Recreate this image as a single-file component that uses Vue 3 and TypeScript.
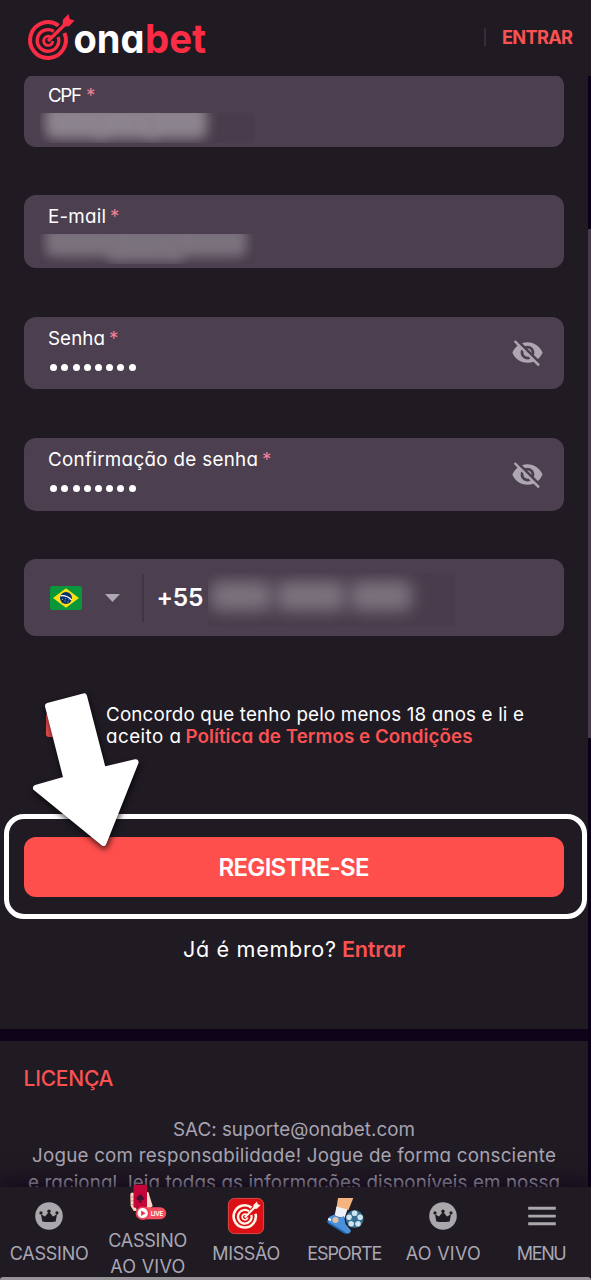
<script setup lang="ts">
interface Field {
  id: string
  label: string
  width: number
  secret: boolean
}
interface Line {
  text: string
  width: number
}
interface NavItem {
  id: string
  icon: 'crown' | 'live' | 'target' | 'sport' | 'menu'
  lines: Line[]
}

const fields: Field[] = [
  { id: 'cpf', label: 'CPF', width: 34, secret: false },
  { id: 'email', label: 'E-mail', width: 58, secret: false },
  { id: 'senha', label: 'Senha', width: 57, secret: true },
  { id: 'confirma', label: 'Confirmação de senha', width: 210, secret: true },
]

const licence: Line[] = [
  { text: 'SAC: suporte@onabet.com', width: 242 },
  { text: 'Jogue com responsabilidade! Jogue de forma consciente', width: 524 },
  { text: 'e racional, leia todas as informações disponíveis em nossa', width: 532 },
]

const nav: NavItem[] = [
  { id: 'cassino', icon: 'crown', lines: [{ text: 'CASSINO', width: 79 }] },
  { id: 'cassino-vivo', icon: 'live', lines: [{ text: 'CASSINO', width: 79 }, { text: 'AO VIVO', width: 75 }] },
  { id: 'missao', icon: 'target', lines: [{ text: 'MISSÃO', width: 68 }] },
  { id: 'esporte', icon: 'sport', lines: [{ text: 'ESPORTE', width: 75 }] },
  { id: 'vivo', icon: 'crown', lines: [{ text: 'AO VIVO', width: 75 }] },
  { id: 'menu', icon: 'menu', lines: [{ text: 'MENU', width: 50 }] },
]

// Tracks a single-line label so that it fills the given width in pixels.
const vFit = {
  mounted(el: HTMLElement, binding: { value: number }) {
    const count = (el.textContent ?? '').length
    const natural = el.getBoundingClientRect().width
    const spacing = (binding.value - natural) / Math.max(count - 1, 1)
    el.style.letterSpacing = `${spacing.toFixed(3)}px`
    el.style.marginRight = `${(-spacing).toFixed(3)}px`
  },
}
</script>

<template>
  <div class="page">
    <header class="header">
      <svg class="logo" width="184" height="50" viewBox="25 12 184 50">
        <g fill="none" stroke="#fb2c44">
          <path d="M58.5 25.6A17.9 17.9 0 1 0 64.4 33" stroke-width="4" />
          <path d="M53.8 31.4A10.8 10.8 0 1 0 58.2 37" stroke-width="3.4" />
          <path d="M51 37.2A4.6 4.6 0 1 0 52.8 41" stroke-width="2.8" />
          <path d="M48 41L66 23.5" stroke-width="3.4" />
        </g>
        <path d="M62.5 26.5L63 19.5L68.5 14L69.7 19L74.5 20.5L69 26.2Z" fill="#fb2c44" />
        <text class="word" x="73.5" y="52.5" fill="#fff" textLength="71" lengthAdjust="spacingAndGlyphs">ona</text>
        <text class="word" x="145" y="52.5" fill="#fb2c44" textLength="61" lengthAdjust="spacingAndGlyphs">bet</text>
      </svg>
      <div class="login"><span v-fit="71" class="fit">ENTRAR</span></div>
    </header>

    <div class="viewport">
      <main class="content">
        <form class="form">
          <div v-for="f in fields" :key="f.id" class="field">
            <div class="field-main">
              <div class="label"><span v-fit="f.width" class="fit">{{ f.label }}</span><i class="star">*</i></div>
              <div v-if="f.secret" class="dots"><b v-for="n in 8" :key="n" /></div>
              <div v-else class="redacted" :class="f.id"><b /><b /><b /></div>
            </div>
            <svg v-if="f.secret" class="eye" width="33" height="33" viewBox="0 0 24 24" fill="#aca7b0">
              <path d="M12 7c2.76 0 5 2.24 5 5 0 .65-.13 1.26-.36 1.83l2.92 2.92c1.51-1.26 2.7-2.89 3.43-4.75-1.73-4.39-6-7.5-11-7.5-1.4 0-2.74.25-3.98.7l2.16 2.16C10.74 7.13 11.35 7 12 7zM2 4.27l2.28 2.28.46.46C3.08 8.3 1.78 10.02 1 12c1.73 4.39 6 7.5 11 7.5 1.55 0 3.03-.3 4.38-.84l.42.42L19.73 22 21 20.73 3.27 3 2 4.27zM7.53 9.8l1.55 1.55c-.05.21-.08.43-.08.65 0 1.66 1.34 3 3 3 .22 0 .44-.03.65-.08l1.55 1.55c-.67.33-1.41.53-2.2.53-2.76 0-5-2.24-5-5 0-.79.2-1.53.53-2.2zm4.31-.78l3.15 3.15.02-.16c0-1.66-1.34-3-3-3l-.17.01z" />
            </svg>
          </div>

          <div class="field phone">
            <svg class="flag" width="32" height="24" viewBox="0 0 32 24">
              <rect width="32" height="24" rx="2.5" fill="#0a9739" />
              <path d="M16 2.2L29 12L16 21.8L3 12Z" fill="#fee011" />
              <circle cx="16" cy="12" r="6" fill="#06306f" />
              <path d="M10.6 9.8Q17 9 21.6 14" fill="none" stroke="#fff" stroke-width="1.3" />
              <path d="M12 13.5h1M14.5 15h1M17.5 16h1M15 12.7h.8M18.5 13.8h.8" stroke="#b9c8df" stroke-width="0.9" />
            </svg>
            <svg class="caret" width="15" height="8" viewBox="0 0 15 8"><path d="M0 0H15L7.5 8Z" fill="#aca7b0" /></svg>
            <span class="rule" />
            <span class="prefix"><span v-fit="47" class="fit">+55</span></span>
            <div class="redacted number"><b /><b /><b /></div>
          </div>

          <div class="consent">
            <span class="check" />
            <div class="consent-text">
              <div><span v-fit="418" class="fit">Concordo que tenho pelo menos 18 anos e li e</span></div>
              <div><span v-fit="75" class="fit">aceito a</span><a v-fit="287" class="fit link policy">Política de Termos e Condições</a></div>
            </div>
          </div>

          <button type="button" class="submit"><span v-fit="151" class="fit">REGISTRE-SE</span></button>
          <p class="member"><span v-fit="153" class="fit">Já é membro?</span><a v-fit="63" class="fit link enter">Entrar</a></p>
        </form>

        <section class="licence">
          <h2><span v-fit="90" class="fit">LICENÇA</span></h2>
          <div v-for="l in licence" :key="l.text" class="licence-line"><span v-fit="l.width" class="fit">{{ l.text }}</span></div>
        </section>
      </main>
      <div class="rail"><div class="thumb" /></div>
    </div>

    <nav class="nav">
      <div v-for="item in nav" :key="item.id" class="nav-item" :class="{ tall: item.lines.length > 1 }">
        <svg v-if="item.icon === 'crown'" width="38" height="38" viewBox="0 0 38 38">
          <circle cx="19" cy="19" r="13.8" fill="#aaa8ab" />
          <path d="M12.3 24.5L11 17.2L15 19.4L19 14.8L23 19.4L27 17.2L25.7 24.5Q19 25.6 12.3 24.5Z" fill="#201a23" />
          <circle cx="11" cy="15.9" r="1.6" fill="#201a23" />
          <circle cx="19" cy="14.2" r="1.7" fill="#201a23" />
          <circle cx="27" cy="15.9" r="1.6" fill="#201a23" />
        </svg>
        <svg v-else-if="item.icon === 'live'" class="live-icon" width="38" height="38" viewBox="3.3 0 38 38">
          <path d="M4.6 10Q5.5 7.5 8.5 9L11 27H8L5 22Z" fill="#ffd2bb" />
          <path d="M5.2 13h3.4M5.4 16.8h3.4M5.8 20.5h3.4" stroke="#bd7d70" stroke-width="0.7" />
          <path d="M18 13L21 8Q23.5 7.5 23.5 11L27 22L20 27H14Z" fill="#ffdcc9" />
          <rect x="7.8" y="0.8" width="13.5" height="23" rx="1.5" fill="#c30539" />
          <path d="M14.5 10L18.2 14Q18.5 17 15.2 16L16.2 18.5H12.8L13.8 16Q10.5 17 10.8 14Z" fill="#40132d" />
          <rect x="10" y="23.2" width="30.5" height="12" rx="6" fill="#f54d60" />
          <circle cx="17" cy="29.2" r="6.8" fill="#ed3d52" />
          <circle cx="17" cy="29.2" r="5.1" fill="#fff" />
          <path d="M15.4 26.4L20 29.2L15.4 32Z" fill="#e63950" />
          <text class="live" x="25" y="31.6" fill="#fff" textLength="12.5">LIVE</text>
        </svg>
        <svg v-else-if="item.icon === 'target'" width="38" height="38" viewBox="0 0 38 38">
          <rect x="1.4" y="1.4" width="35.2" height="35.2" rx="6" fill="#dc1014" stroke="#f55850" stroke-width="0.8" />
          <g fill="none" stroke="#fff5e8">
            <path d="M24.5 10.6A11.1 11.1 0 1 0 28.5 16.7" stroke-width="2.6" />
            <path d="M22 14.4A6.8 6.8 0 1 0 24.4 18" stroke-width="2.2" />
            <path d="M20 18A2.8 2.8 0 1 0 20.7 20.5" stroke-width="1.7" />
            <path d="M17.8 20.5L28 10" stroke-width="2" />
          </g>
          <path d="M26 11.7L26.5 8L30 4.5L30.7 7.3L33.6 8L30 11.8Z" fill="#fff5e8" />
        </svg>
        <svg v-else-if="item.icon === 'sport'" width="38" height="38" viewBox="0 0 38 38">
          <path d="M12 1H27.3L22.5 13L10.5 11Z" fill="#f4b47f" />
          <path d="M10.5 9.5L21.5 12.5L18.5 21L8.5 19Z" fill="#eef2f8" />
          <path d="M8.3 17.5Q13 22 18 19L19.5 27L25 33.5Q24 38 18 36L1.2 25L3 20Z" fill="#4a91dc" />
          <path d="M2 25.5L19 36" stroke="#1d65ae" stroke-width="1.5" />
          <path d="M2.2 21.8L5 23" stroke="#fff" stroke-width="2" />
          <circle cx="9.5" cy="23" r="3" fill="#e9bf9e" />
          <circle cx="28.6" cy="22" r="8.9" fill="#356f91" />
          <g fill="#cee4ee">
            <circle cx="28.6" cy="16.2" r="2.8" />
            <circle cx="34.1" cy="20.2" r="2.8" />
            <circle cx="32" cy="26.7" r="2.8" />
            <circle cx="25.2" cy="26.7" r="2.8" />
            <circle cx="23.1" cy="20.2" r="2.8" />
          </g>
          <path d="M28.6 18.8L31.7 21L30.5 24.7H26.7L25.5 21Z" fill="#356f91" />
        </svg>
        <svg v-else width="38" height="38" viewBox="0 0 38 38">
          <path d="M5.2 11.3H32.8M5.2 19.1H32.8M5.2 26.7H32.8" stroke="#aaa8ab" stroke-width="2.9" />
        </svg>
        <div class="nav-label">
          <div v-for="l in item.lines" :key="l.text"><span v-fit="l.width" class="fit">{{ l.text }}</span></div>
        </div>
      </div>
    </nav>
    <div class="home-edge" />

    <div class="highlight" />
    <svg class="arrow" width="130" height="180" viewBox="20 680 130 180">
      <path d="M48 706L84 696.3L103 769.8L135.6 762.2L103.5 843L36 788L66.6 779.2Z" fill="#fff" stroke="#fff" stroke-width="6" stroke-linejoin="round" />
    </svg>
  </div>
</template>

<style>
html,
body {
  background: #201a23;
  overflow: hidden;
}
</style>

<style scoped>
.page {
  position: relative;
  display: flex;
  flex-direction: column;
  width: 591px;
  height: 1280px;
  overflow: hidden;
  background: #201a23;
  color: #fff;
  font-family: Inter, 'Open Sans', sans-serif;
  font-feature-settings: 'cv11';
  font-size: 18.8px;
}
.fit {
  display: inline-block;
  white-space: nowrap;
}
.header {
  flex: none;
  display: flex;
  align-items: center;
  justify-content: space-between;
  box-sizing: border-box;
  height: 76px;
  padding: 0 18px 2px 25px;
}
.logo {
  display: block;
  overflow: visible;
}
.word {
  font-size: 40px;
  font-weight: 700;
}
.login {
  display: flex;
  align-items: center;
  height: 18px;
  padding-left: 16px;
  border-left: 2px solid #352e39;
  color: #fa5252;
  font-size: 18.2px;
  font-weight: 700;
}
.viewport {
  flex: none;
  display: flex;
  height: 1204px;
  overflow: hidden;
}
.content {
  width: 588px;
}
.form {
  display: flex;
  flex-direction: column;
  box-sizing: border-box;
  height: 953px;
  padding: 0 24px;
}
.field {
  flex: none;
  display: flex;
  align-items: center;
  box-sizing: border-box;
  height: 72.7px;
  margin-bottom: 48.6px;
  padding: 0 20px 0 16px;
  border-radius: 12px;
  background: #4c3f4f;
}
.field:first-child {
  margin-top: -2px;
}
.field-main {
  flex: 1;
  align-self: stretch;
}
.label {
  display: flex;
  height: 24px;
  margin: 10px 0 0 8px;
  line-height: 24px;
}
.star {
  margin-left: 4px;
  color: #f08096;
  font-style: normal;
}
.dots {
  display: flex;
  gap: 4.2px;
  padding: 13.1px 0 0 10.3px;
}
.dots b {
  width: 7px;
  height: 7px;
  border-radius: 50%;
  background: #fff;
}
.redacted {
  display: flex;
  align-items: center;
  box-sizing: border-box;
  overflow: hidden;
  background: #493c4c;
}
.redacted b {
  flex: none;
  border-radius: 8px;
  background: #8b838d;
  filter: blur(6px);
}
.cpf,
.email {
  width: 215px;
  height: 30px;
  margin-top: 5px;
  padding: 0 0 0 5px;
}
.cpf {
  align-items: flex-start;
}
.cpf b {
  width: 62px;
  height: 35px;
  margin: -9px -12px 0 0;
}
.email {
  align-items: flex-start;
}
.email b {
  width: 76px;
  height: 32px;
  margin: -9px -13px 0 0;
  background: #7a727d;
}
.email b:nth-child(2) {
  height: 37px;
}
.eye {
  flex: none;
}
.phone {
  height: 77px;
  margin-bottom: 0;
  padding: 0 0 0 26px;
}
.caret {
  margin-left: 22.5px;
}
.rule {
  width: 2px;
  height: 48px;
  margin-left: 22px;
  background: #413545;
}
.prefix {
  width: 46px;
  margin: -1px 0 0 13px;
  font-size: 24.5px;
  font-weight: 600;
}
.number {
  width: 247px;
  height: 53px;
  margin: 3px 0 0 5px;
  padding: 0 0 6px 2px;
  gap: 4px;
}
.number b {
  width: 62px;
  height: 30px;
  background: #7b727d;
  filter: blur(8px);
}
.number b:nth-child(2) {
  width: 70px;
}
.consent {
  display: flex;
  margin: 67.5px 0 0 22px;
  height: 44px;
}
.check {
  width: 23px;
  height: 24px;
  margin-top: 9.5px;
  border-radius: 3px;
  background: #e34b4d;
}
.consent-text {
  margin-left: 37px;
  line-height: 22px;
  white-space: nowrap;
}
.link {
  color: #fa5252;
  font-weight: 600;
}
.policy {
  margin-left: 4.5px;
}
.submit {
  flex: none;
  display: flex;
  align-items: center;
  justify-content: center;
  height: 60.5px;
  margin: 89px 0 0;
  padding: 1px 0 0;
  border: 0;
  border-radius: 12px;
  background: #ff4f4d;
  color: #fff;
  font: inherit;
  font-feature-settings: inherit;
  font-size: 24px;
  font-weight: 600;
}
.member {
  display: flex;
  justify-content: center;
  margin: 37.5px 0 0;
  font-size: 21.6px;
  line-height: 28px;
}
.enter {
  margin-left: 6px;
}
.licence {
  border-top: 12px solid #0e0319;
  color: #a7a3b0;
  text-align: center;
}
.licence h2 {
  margin: 23.6px 0 24.2px 23.5px;
  color: #fa5252;
  font-size: 21px;
  font-weight: 500;
  line-height: 28px;
  text-align: left;
}
.licence-line {
  height: 26.5px;
  line-height: 26.5px;
}
.rail {
  width: 3px;
  padding-top: 153px;
  background: #0b0117;
}
.thumb {
  height: 509px;
  background: #463a4b;
}
.nav {
  position: absolute;
  left: 0;
  right: 0;
  bottom: 3px;
  display: grid;
  grid-template-columns: repeat(6, 1fr);
  height: 90px;
  background: #201a23;
  box-shadow: 0 -2px 20px rgba(13, 3, 25, 0.9);
  color: #a9a7b4;
  font-size: 18px;
}
.nav-item {
  display: flex;
  flex-direction: column;
  align-items: center;
  padding-top: 10px;
}
.nav-item.tall {
  margin-top: -13px;
}
.nav-label {
  margin-top: 6px;
  line-height: 26px;
  text-align: center;
}
.nav svg {
  display: block;
  flex: none;
}
.live {
  font-size: 6.2px;
  font-weight: 600;
}
.home-edge {
  position: absolute;
  left: 0;
  right: 0;
  bottom: 0;
  height: 3px;
  border-radius: 3px 3px 0 0;
  background: #989398;
}
.highlight {
  position: absolute;
  left: 4px;
  top: 814px;
  box-sizing: border-box;
  width: 583px;
  height: 105px;
  border: 5px solid #fff;
  border-radius: 20px;
}
.arrow {
  position: absolute;
  left: 20px;
  top: 680px;
  filter: drop-shadow(1px 3px 3px rgba(0, 0, 0, 0.75));
}
</style>
